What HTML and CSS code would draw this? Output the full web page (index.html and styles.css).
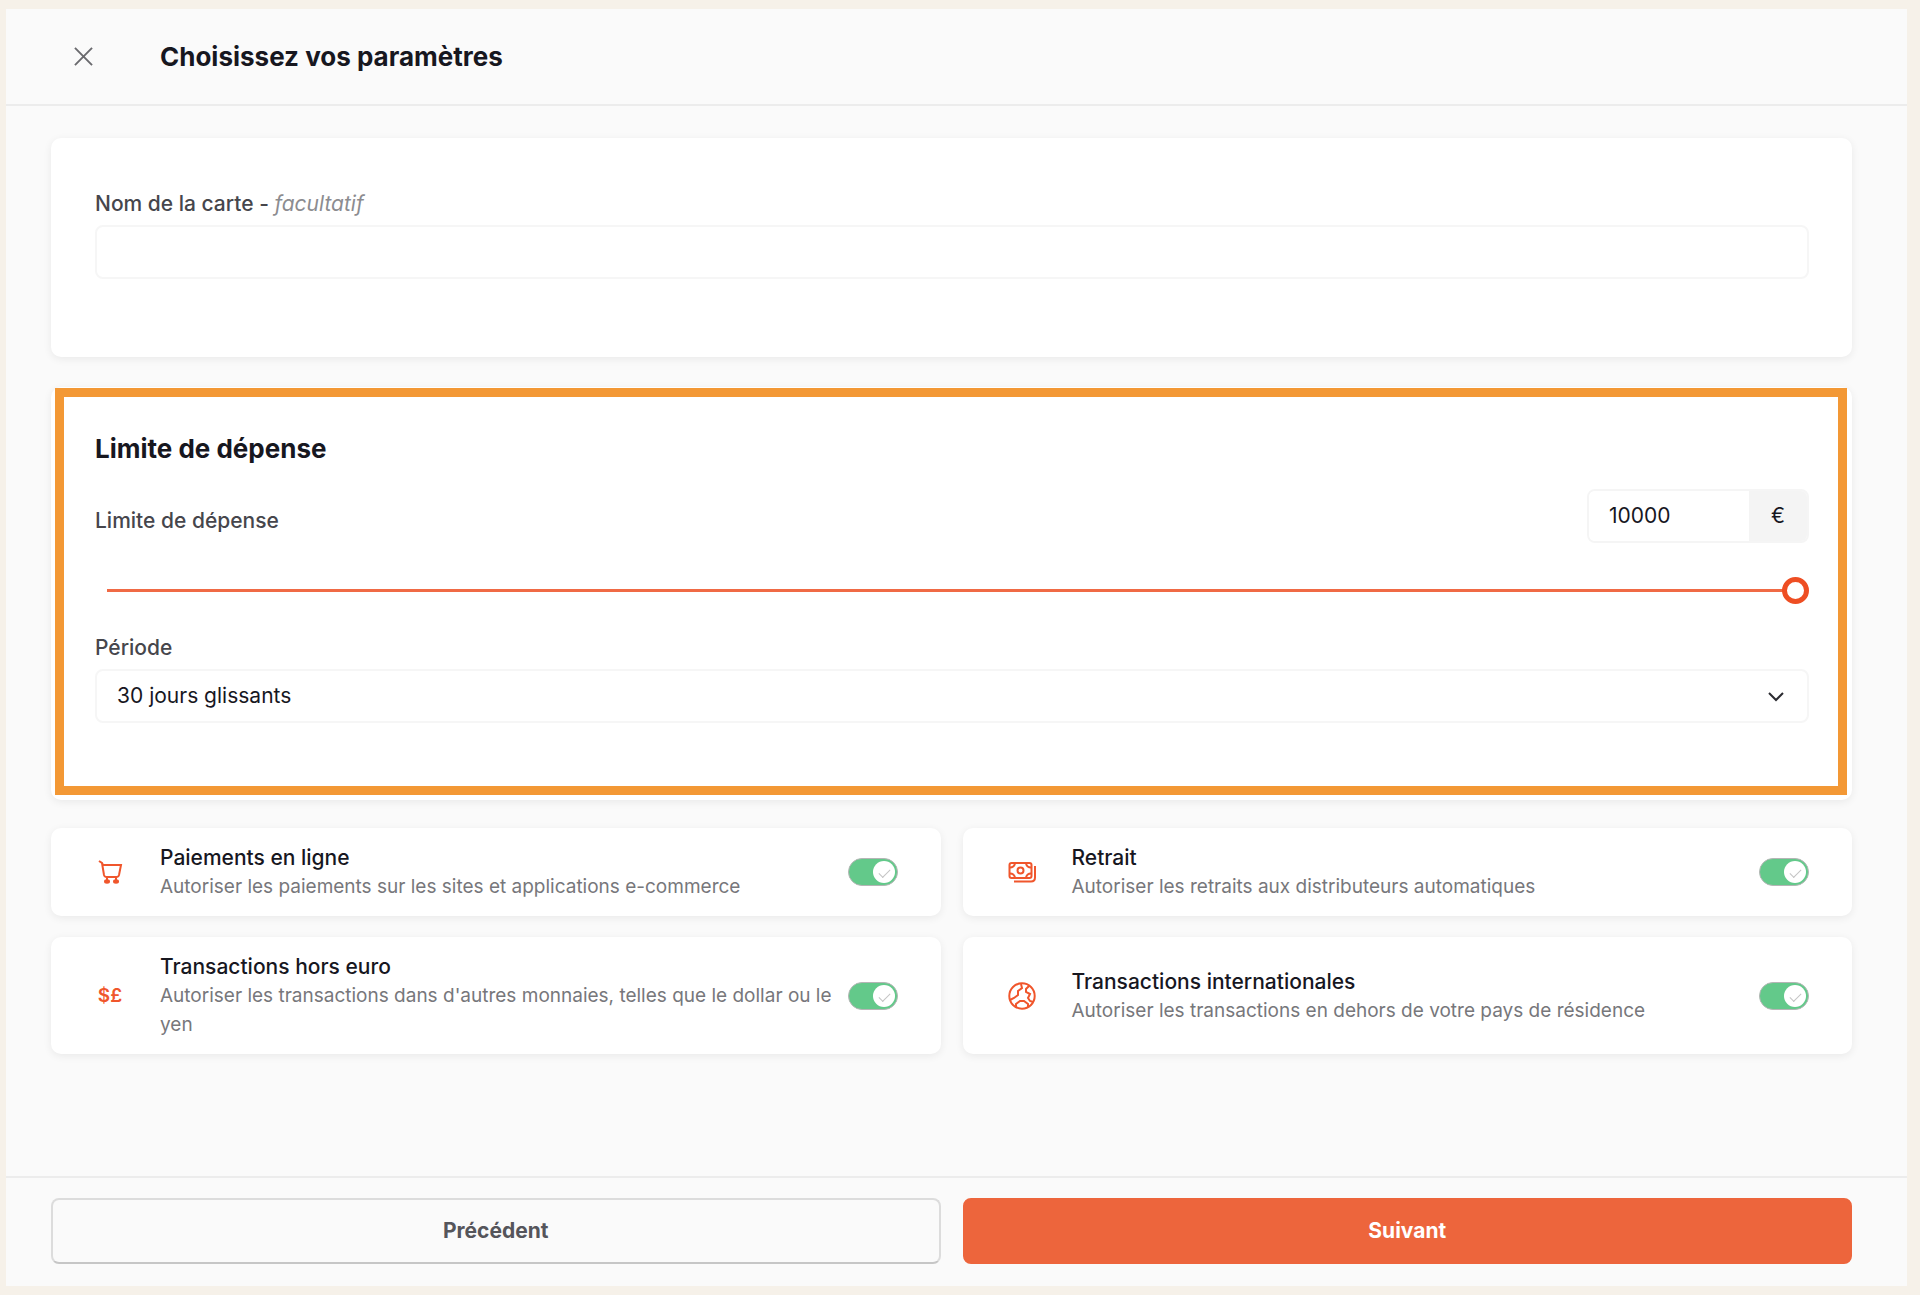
FILE: index.html
```html
<!DOCTYPE html>
<html lang="fr">
<head>
  <meta charset="UTF-8">
  <meta name="viewport" content="width=device-width, initial-scale=1">
  <title>Choisissez vos paramètres</title>
  <link rel="stylesheet" href="styles.css">
</head>
<body>

<form class="panel">

  <!-- Header -->
  <header class="header">
    <button type="button" class="close" aria-label="Fermer">
      <svg viewBox="0 0 20 20" width="19" height="19"><path d="M1 1l18 18M19 1L1 19"/></svg>
    </button>
    <h1 class="heading">Choisissez vos paramètres</h1>
  </header>

  <main class="content">

    <!-- Nom de la carte -->
    <section class="card card-name">
      <label class="label" for="cardName">Nom de la carte - <em>facultatif</em></label>
      <input class="field" type="text" id="cardName">
    </section>

    <!-- Limite de dépense -->
    <section class="card card-limit">
      <div class="highlight">
        <h2 class="heading">Limite de dépense</h2>
        <div class="limit-row">
          <label class="label" for="limitInput">Limite de dépense</label>
          <div class="amount">
            <input type="text" id="limitInput" value="10000">
            <span class="unit">€</span>
          </div>
        </div>
        <input class="slider" type="range" id="limitRange" min="0" max="10000" value="10000" aria-label="Limite de dépense">
        <label class="label" for="period">Période</label>
        <div class="select">
          <select class="field" id="period">
            <option>30 jours glissants</option>
          </select>
          <svg viewBox="0 0 16 10" width="16" height="10"><path d="M1 1l7 7 7-7"/></svg>
        </div>
      </div>
    </section>

    <!-- Options -->
    <div class="options">
      <label class="card option" for="optOnline">
        <svg class="icon" viewBox="0 0 28 28" width="28" height="28">
          <path d="M3 3l3 2 1 2h18l-2 10q-.5 2-2 2H10q-1.500 0-2-2L6 5"/>
          <path d="M11 19v3M20 19v3"/>
          <ellipse class="fill" cx="11" cy="23.500" rx="3" ry="2.200"/>
          <ellipse class="fill" cx="20" cy="23.500" rx="3" ry="2.200"/>
        </svg>
        <span class="text">
          <span class="option-title">Paiements en ligne</span>
          <span class="option-desc">Autoriser les paiements sur les sites et applications e-commerce</span>
        </span>
        <input class="toggle" type="checkbox" id="optOnline" checked>
      </label>

      <label class="card option" for="optCash">
        <svg class="icon" viewBox="0 0 28 28" width="28" height="28">
          <rect x="1.500" y="5" width="22" height="15" rx="2"/>
          <circle cx="12.500" cy="12.500" r="3"/>
          <path d="M2 9.500q4 0 5-4M23 9.500q-4 0-5-4M2 15.500q4 0 5 4M23 15.500q-4 0-5 4"/>
          <path d="M6 23.500h17q4 0 4-4V8"/>
        </svg>
        <span class="text">
          <span class="option-title">Retrait</span>
          <span class="option-desc">Autoriser les retraits aux distributeurs automatiques</span>
        </span>
        <input class="toggle" type="checkbox" id="optCash" checked>
      </label>

      <label class="card option" for="optForex">
        <span class="icon currency">$£</span>
        <span class="text">
          <span class="option-title">Transactions hors euro</span>
          <span class="option-desc">Autoriser les transactions dans d'autres monnaies, telles que le dollar ou le yen</span>
        </span>
        <input class="toggle" type="checkbox" id="optForex" checked>
      </label>

      <label class="card option" for="optWorld">
        <svg class="icon" viewBox="0 0 28 28" width="28" height="28">
          <circle cx="14" cy="14" r="12.700"/>
          <path d="M13 2l1 4-4 3v4l-4 3-4 2"/>
          <path d="M21 4l-3 3v3l4 2-2 4 2 3 3 1"/>
          <path d="M8 25v-3l4-3h4l4 3v3"/>
        </svg>
        <span class="text">
          <span class="option-title">Transactions internationales</span>
          <span class="option-desc">Autoriser les transactions en dehors de votre pays de résidence</span>
        </span>
        <input class="toggle" type="checkbox" id="optWorld" checked>
      </label>
    </div>

  </main>

  <!-- Footer -->
  <footer class="footer">
    <button type="button" class="btn">Précédent</button>
    <button type="button" class="btn btn-primary">Suivant</button>
  </footer>

</form>

<script>
  const limitInput = document.getElementById('limitInput');
  const limitRange = document.getElementById('limitRange');

  limitRange.addEventListener('input', () => {
    limitInput.value = limitRange.value;
  });
  limitInput.addEventListener('change', () => {
    limitRange.value = limitInput.value;
  });
</script>

</body>
</html>
```
FILE: styles.css
```css
* {
  box-sizing: border-box;
}
body {
  margin: 0;
  padding: 9px 13px 9px 6px;
  font-family: Inter, sans-serif;
  font-size: 21px;
  line-height: 28px;
  color: #17171f;
  background: #f6f1e9;
}
input,
select,
button {
  margin: 0;
  font: inherit;
  color: inherit;
}
.panel {
  display: flex;
  flex-direction: column;
  min-height: calc(100vh - 18px);
  background: #fafafa;
}
.heading {
  margin: 0;
  font-size: 26px;
  font-weight: 700;
  line-height: 36px;
}
/* Header */
.header {
  display: flex;
  align-items: center;
  height: 97px;
  padding: 0 55px 0 68px;
  border-bottom: 2px solid #ececec;
}
.close {
  display: flex;
  width: 86px;
  padding: 0;
  border: 0;
  background: none;
  cursor: pointer;
}
.close svg {
  fill: none;
  stroke: #6a6a6e;
  stroke-width: 2;
}
/* Cards */
.content {
  flex: 1;
  padding: 32px 55px 32px 45px;
}
.card {
  background: #fff;
  border-radius: 10px;
  box-shadow: 0 2px 8px rgba(0,0,0,0.07);
}
.card-name {
  padding: 52px 43px 78px 44px;
  margin-bottom: 30px;
}
.card-limit {
  padding: 1px 5px 5px 4px;
  margin-bottom: 28px;
}
.highlight {
  padding: 34px 29px 63px 31px;
  border: 9px solid #f39835;
}
.label {
  display: block;
  margin-bottom: 7px;
  font-weight: 500;
  color: #46464c;
}
.label em {
  font-weight: 400;
  color: #8c8c90;
}
.field {
  display: block;
  width: 100%;
  height: 54px;
  padding: 0 20px;
  border: 2px solid #f6f6f6;
  border-radius: 8px;
  background: #fff;
}
.limit-row {
  display: flex;
  justify-content: space-between;
  align-items: center;
  margin: 22px 0 33px;
}
.limit-row .label {
  margin: 10px 0 0;
}
.amount {
  display: flex;
  width: 222px;
  height: 54px;
  border: 2px solid #f5f5f5;
  border-radius: 8px;
  overflow: hidden;
}
.amount input {
  flex: 1;
  min-width: 0;
  padding: 0 20px;
  border: 0;
  background: #fff;
}
.unit {
  width: 58px;
  line-height: 50px;
  text-align: center;
  background: #f4f4f4;
}
/* Slider */
.slider {
  display: block;
  width: 100%;
  height: 28px;
  margin-bottom: 30px;
  appearance: none;
  background: linear-gradient(#f06a45, #f06a45) 12px 50% / calc(100% - 24px) 3px no-repeat;
}
.slider::-webkit-slider-thumb {
  appearance: none;
  width: 27px;
  height: 27px;
  border: 5px solid #ee4e23;
  border-radius: 50%;
  background: #fff;
}
.select {
  position: relative;
}
.select select {
  appearance: none;
}
.select svg {
  position: absolute;
  top: 23px;
  right: 25px;
  fill: none;
  stroke: #2b2b31;
  stroke-width: 2;
  pointer-events: none;
}
/* Options */
.options {
  display: grid;
  grid-template-columns: 1fr 1fr;
  gap: 21px 22px;
}
.option {
  display: flex;
  align-items: center;
  padding: 15px 43px 15px 45px;
  cursor: pointer;
}
.icon {
  flex: none;
  width: 28px;
  margin-right: 36px;
  fill: none;
  stroke: #f0562c;
  stroke-width: 2;
}
.icon .fill {
  fill: #f0562c;
  stroke: none;
}
.currency {
  font-size: 19px;
  font-weight: 600;
  text-align: center;
  color: #f0562c;
}
.text {
  flex: 1;
  margin-right: 12px;
  line-height: 29px;
}
.option-title,
.option-desc {
  display: block;
}
.option-title {
  font-weight: 500;
}
.option-desc {
  font-size: 19px;
  color: #77777b;
}
.toggle {
  position: relative;
  flex: none;
  width: 50px;
  height: 28px;
  appearance: none;
  border: 1px solid #b5b5b5;
  border-radius: 14px;
  background: #ccc;
  cursor: pointer;
}
.toggle::before {
  content: "";
  position: absolute;
  top: 2px;
  left: 2px;
  width: 22px;
  height: 22px;
  border-radius: 50%;
  background: #fff;
}
.toggle:checked {
  background: #63c98a;
}
.toggle:checked::before {
  left: 24px;
}
.toggle:checked::after {
  content: "";
  position: absolute;
  top: 10px;
  left: 30px;
  width: 10px;
  height: 5px;
  border: solid #c4c4c4;
  border-width: 0 0 1px 1px;
  transform: rotate(-45deg);
}
/* Footer */
.footer {
  display: grid;
  grid-template-columns: 1fr 1fr;
  gap: 22px;
  padding: 20px 55px 22px 45px;
  border-top: 2px solid #ececec;
}
.btn {
  height: 66px;
  border: 2px solid #dcdcdc;
  border-bottom-color: #c6c6c6;
  border-radius: 8px;
  font-weight: 700;
  color: #55555b;
  background: #fafafa;
  cursor: pointer;
}
.btn-primary {
  border-color: #ed653c;
  color: #fff;
  background: #ed653c;
}
```
